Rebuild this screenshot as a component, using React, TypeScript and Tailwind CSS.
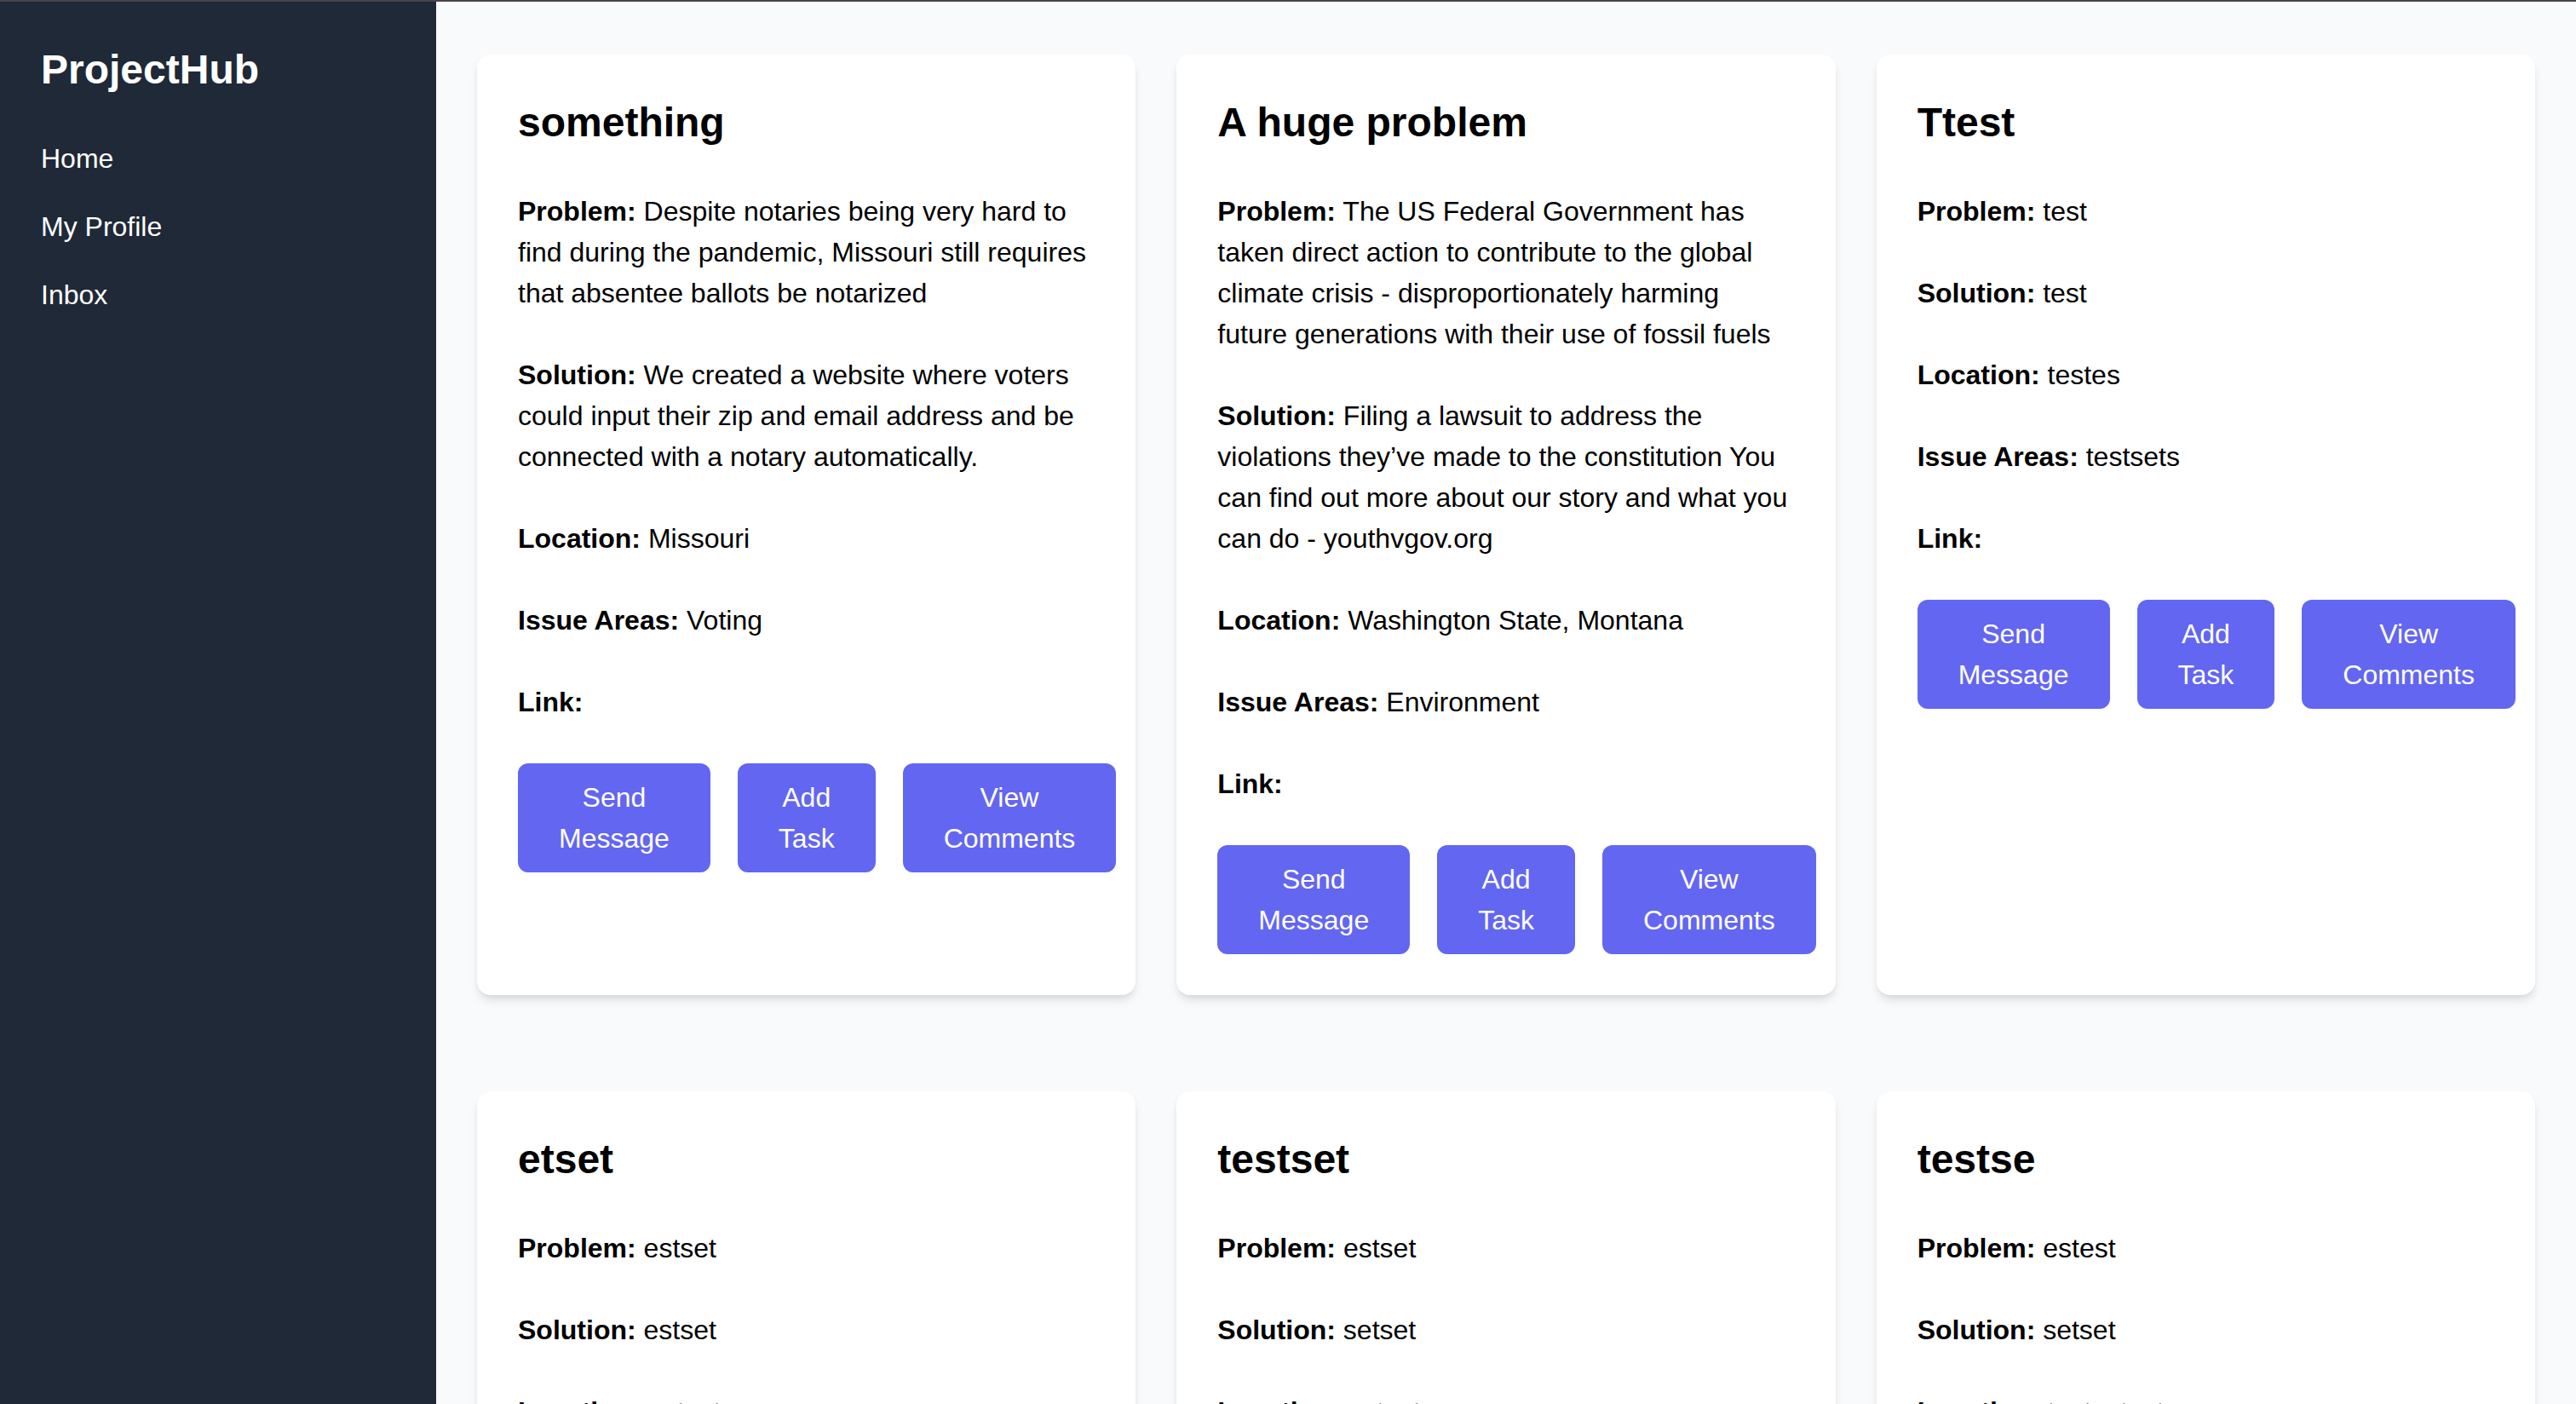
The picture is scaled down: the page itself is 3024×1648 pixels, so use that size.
import React from "react"

type Project = {
  title: string
  problem: string
  solution: string
  location: string
  issueAreas: string
  link: string
}

const projects: Project[] = [
  {
    title: "something",
    problem:
      "Despite notaries being very hard to find during the pandemic, Missouri still requires that absentee ballots be notarized",
    solution:
      "We created a website where voters could input their zip and email address and be connected with a notary automatically.",
    location: "Missouri",
    issueAreas: "Voting",
    link: "",
  },
  {
    title: "A huge problem",
    problem:
      "The US Federal Government has taken direct action to contribute to the global climate crisis - disproportionately harming future generations with their use of fossil fuels",
    solution:
      "Filing a lawsuit to address the violations they\u2019ve made to the constitution You can find out more about our story and what you can do - youthvgov.org",
    location: "Washington State, Montana",
    issueAreas: "Environment",
    link: "",
  },
  {
    title: "Ttest",
    problem: "test",
    solution: "test",
    location: "testes",
    issueAreas: "testsets",
    link: "",
  },
  {
    title: "etset",
    problem: "estset",
    solution: "estset",
    location: "estset",
    issueAreas: "estset",
    link: "",
  },
  {
    title: "testset",
    problem: "estset",
    solution: "setset",
    location: "estset",
    issueAreas: "setset",
    link: "",
  },
  {
    title: "testse",
    problem: "estest",
    solution: "setset",
    location: "testestset",
    issueAreas: "setset",
    link: "",
  },
]

function Field({ label, value }: { label: string; value: string }) {
  return (
    <p className="mb-[48px] text-[32px] leading-[48px] text-black">
      <strong className="font-bold">{label}:</strong> {value}
    </p>
  )
}

function ProjectCard({ project }: { project: Project }) {
  return (
    <div className="rounded-[16px] bg-white p-[48px] shadow-[0_8px_12px_-2px_rgba(0,0,0,0.1),0_4px_8px_-4px_rgba(0,0,0,0.1)]">
      <h2 className="mb-[48px] text-[48px] font-bold leading-[64px] text-black">{project.title}</h2>
      <Field label="Problem" value={project.problem} />
      <Field label="Solution" value={project.solution} />
      <Field label="Location" value={project.location} />
      <Field label="Issue Areas" value={project.issueAreas} />
      <Field label="Link" value={project.link} />
      <div className="flex gap-[32px]">
        <button className="rounded-[12px] bg-[#6366f1] px-[48px] py-[16px] text-[32px] leading-[48px] text-white">
          Send Message
        </button>
        <button className="rounded-[12px] bg-[#6366f1] px-[48px] py-[16px] text-[32px] leading-[48px] text-white">
          Add Task
        </button>
        <button className="rounded-[12px] bg-[#6366f1] px-[48px] py-[16px] text-[32px] leading-[48px] text-white">
          View Comments
        </button>
      </div>
    </div>
  )
}

export default function App() {
  return (
    <div className="flex h-[1648px] flex-col overflow-hidden font-['Liberation_Sans',Arial,sans-serif]">
      <div className="h-[2px] shrink-0 bg-[#4b4547]" />
      <div className="flex min-h-0 flex-1">
        <aside className="w-[512px] shrink-0 bg-[#1f2937] px-[48px] pt-[48px] text-white">
          <h1 className="mb-[48px] text-[48px] font-bold leading-[64px]">ProjectHub</h1>
          <ul>
            <li className="mb-[32px] text-[32px] leading-[48px]">Home</li>
            <li className="mb-[32px] text-[32px] leading-[48px]">My Profile</li>
            <li className="mb-[32px] text-[32px] leading-[48px]">Inbox</li>
          </ul>
        </aside>
        <main className="flex-1 overflow-hidden bg-[#f9fafb] px-[48px] pt-[62px]">
          <div className="grid grid-cols-3 gap-x-[48px] gap-y-[113px]">
            {projects.map((p) => (
              <ProjectCard key={p.title} project={p} />
            ))}
          </div>
        </main>
      </div>
    </div>
  )
}
